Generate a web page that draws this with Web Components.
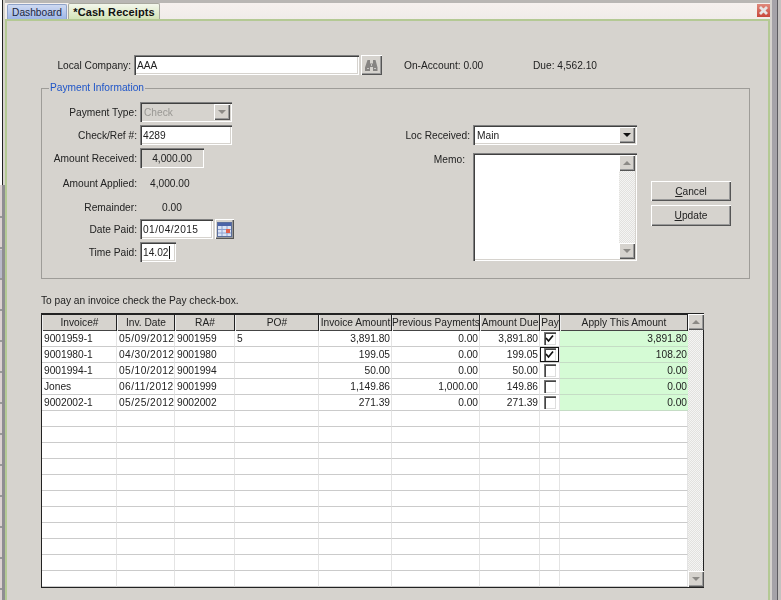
<!DOCTYPE html>
<html>
<head>
<meta charset="utf-8">
<style>
  html, body { margin: 0; height: 600px; overflow: hidden; background: #d6d3ce; }
  body { font: 10.2px "Liberation Sans", Arial, sans-serif; color: #222; }
</style>
</head>
<body>
<cash-app></cash-app>
<script>
// shared classic win look
const SUNKEN = 'box-shadow: inset 1px 1px #808080, inset 2px 2px #404040, inset -1px -1px #fff, inset -2px -2px #d6d3ce;';
const RAISED = 'box-shadow: inset 1px 1px #fff, inset -1px -1px #555, inset -2px -2px #999;';
const BASE = '* { box-sizing: border-box; } .d { letter-spacing: .45px; }';

class WinEl extends HTMLElement {
  constructor() {
    super();
    this.attachShadow({ mode: 'open' });
  }
  connectedCallback() {
    this.shadowRoot.innerHTML = `<style>${BASE}${this.css()}</style>${this.html()}`;
  }
  css() { return ''; }
  html() { return '<slot></slot>'; }
}

class WinArrow extends WinEl {
  css() {
    return `:host { display: flex; align-items: center; justify-content: center; width: 16px; height: 16px; background: #d6d3ce; ${RAISED} flex: none; }`;
  }
  html() {
    const col = this.hasAttribute('off') ? '#8c8a86' : '#111';
    const pts = this.getAttribute('dir') === 'up' ? '0,5 8,5 4,1' : '0,1 8,1 4,5';
    return `<svg width="8" height="6"><polygon points="${pts}" fill="${col}"/></svg>`;
  }
}

class WinInput extends WinEl {
  css() {
    return `:host { display: flex; align-items: center; height: 20px; padding: 0 2px 0 3px; background: #fff; white-space: nowrap; overflow: hidden; ${SUNKEN} }`;
  }
}

class WinSelect extends WinEl {
  css() {
    return `:host { display: flex; align-items: center; justify-content: space-between; height: 20px; padding: 0 2px 0 4px; background: #fff; ${SUNKEN} }
      :host([off]) { background: #d6d3ce; color: #9a9894; }`;
  }
  html() {
    return `<slot></slot><win-arrow dir="down" ${this.hasAttribute('off') ? 'off' : ''}></win-arrow>`;
  }
}

class WinBtn extends WinEl {
  css() {
    return `:host { display: flex; align-items: center; justify-content: center; height: 20px; background: #d6d3ce; ${RAISED} }`;
  }
}

class WinScroll extends WinEl {
  css() {
    return `:host { display: flex; flex-direction: column; justify-content: space-between; width: 16px;
      background: repeating-conic-gradient(#e2e1de 0 25%, #f4f4f3 0 50%) 0 0 / 2px 2px; }`;
  }
  html() {
    return '<win-arrow dir="up" off></win-arrow><win-arrow dir="down" off></win-arrow>';
  }
}

class WinField extends WinEl {
  css() {
    const w = this.getAttribute('w') || 95;
    return `:host { display: grid; grid-template-columns: ${w}px 1fr; column-gap: 3px; align-items: center; height: ${this.getAttribute('h') || 20}px; }
      :host([top]) .lab { align-self: start; padding: 1px 5px 0 0; }
      .lab { text-align: right; white-space: nowrap; }
      .val { display: flex; align-items: center; gap: 2px; }`;
  }
  html() {
    return `<div class="lab"><slot name="label"></slot></div><div class="val"><slot></slot></div>`;
  }
}

class WinGroup extends WinEl {
  css() {
    return `:host { display: block; width: 709px; margin-top: 6px; }
      fieldset { margin: 0; padding: 7px 0 16px 0; border: 1px solid #9e9c98; min-width: 0; }
      legend { margin-left: 7px; padding: 0 1px; height: 14px; line-height: 14px; color: #1f55c8; }`;
  }
  html() {
    return `<fieldset><legend>${this.getAttribute('legend')}</legend><slot></slot></fieldset>`;
  }
}

class TabBar extends WinEl {
  css() {
    return `:host { display: flex; align-items: flex-end; height: 19px; padding-left: 2px; padding-right: 0; flex: none; gap: 1px;
        background: linear-gradient(#b9b7b4 0 3px, #f6f1ee 3px, #f0ece9 100%); }
      .tab { display: flex; align-items: center; justify-content: center; border-radius: 2px 2px 0 0; }
      .a { width: 60px; height: 15px; color: #1c2740;
        background: linear-gradient(#cfdaf2, #9fb6e6); border: 1px solid #8fa3c9; border-bottom: 0; }
      .b { width: 92px; height: 16px; font: bold 11px "Liberation Sans", Arial, sans-serif; letter-spacing: .1px; color: #111; margin-right: auto;
        background: linear-gradient(#f4f7ec, #d3e3b8); border: 1px solid #a9a89f; border-bottom: 0; }
      .x { width: 13px; height: 13px; margin-bottom: 2px; background: linear-gradient(#e08a7c, #c8463a); }`;
  }
  html() {
    return `<div class="tab a">Dashboard</div><div class="tab b">*Cash Receipts</div>
      <div class="x"><svg width="13" height="13" style="display:block"><path d="M3 3 10 10M10 3 3 10" stroke="#e6e4e4" stroke-width="2.8"/></svg></div>`;
  }
}

const COLS = [75, 58, 60, 84, 73, 88, 60, 20, 128];
const HEAD = ['Invoice#', 'Inv. Date', 'RA#', 'PO#', 'Invoice Amount', 'Previous Payments', 'Amount Due', 'Pay', 'Apply This Amount'];
const ROWS = [
  ['9001959-1', '05/09/2012', '9001959', '5', '3,891.80', '0.00', '3,891.80', 1, '3,891.80'],
  ['9001980-1', '04/30/2012', '9001980', '', '199.05', '0.00', '199.05', 2, '108.20'],
  ['9001994-1', '05/10/2012', '9001994', '', '50.00', '0.00', '50.00', 0, '0.00'],
  ['Jones', '06/11/2012', '9001999', '', '1,149.86', '1,000.00', '149.86', 0, '0.00'],
  ['9002002-1', '05/25/2012', '9002002', '', '271.39', '0.00', '271.39', 0, '0.00'],
];
const CHECK = '<svg width="9" height="9" viewBox="0 0 9 9"><path d="M1 4 3.500 7 8 1.500" fill="none" stroke="#111" stroke-width="1.700"/></svg>';

class InvoiceGrid extends WinEl {
  css() {
    return `:host { display: flex; width: 663px; height: 275px; margin-top: 5px; border: 1px solid #222; border-right: 2px solid #222; background: #fff; }
      .t { display: grid; grid-template-columns: ${COLS.join('px ')}px; grid-template-rows: 17px; grid-auto-rows: 16px; align-content: start; width: 646px; }
      .h { display: flex; align-items: center; justify-content: center; background: #d6d3ce; white-space: nowrap; overflow: hidden;
        box-shadow: inset 0 1px #222, inset 1px 0 #eee, inset -1px 0 #222, inset 0 -1px #444; }
      .c { display: flex; align-items: center; padding: 0 1px 0 2px; border-bottom: 1px solid #cbcbcb; border-right: 1px solid #e4e4e4; white-space: nowrap; }
      .r { justify-content: flex-end; }
      .g { background: #d5fbd5; border-right: 0; border-bottom-color: #c5dcc5; }
      .p { justify-content: center; padding: 0; }
      .f { box-shadow: inset 0 0 0 1px #111; }
      .cb { width: 12px; height: 13px; display: flex; align-items: center; justify-content: center; background: #fff;
        box-shadow: inset 1px 1px #777, inset 2px 2px #444, inset -1px -1px #ddd; }
      win-scroll { width: 15px; }`;
  }
  html() {
    let s = HEAD.map(h => `<div class="h">${h}</div>`).join('');
    for (const r of ROWS) {
      r.forEach((v, i) => {
        if (i === 7) {
          s += `<div class="c p ${v === 2 ? 'f' : ''}"><span class="cb">${v ? CHECK : ''}</span></div>`;
        } else {
          s += `<div class="c ${i > 3 ? 'r' : ''} ${i === 8 ? 'g' : ''} ${i === 1 ? 'd' : ''}">${v}</div>`;
        }
      });
    }
    for (let n = 0; n < 11; n++) {
      s += COLS.map(() => '<div class="c"></div>').join('');
    }
    return `<div class="t">${s}</div><win-scroll></win-scroll>`;
  }
}

class CashApp extends WinEl {
  css() {
    return `:host { display: flex; width: 781px; height: 600px; overflow: hidden; filter: blur(.4px); }
      .left { width: 5px; flex: none; background:
        linear-gradient(90deg, #fff 0 2px, #222 2px 3px, #d6d3ce 3px) 0 0 / 100% 185px no-repeat,
        linear-gradient(90deg, transparent 0 2px, #8f8e92 2px) 0 0 / 100% 100% no-repeat,
        linear-gradient(#dcd2d2 0 250px, #b9b9c8 250px 280px, #dcd2d2 280px) 0 0 / 100% 100% no-repeat; }
      .lines { width: 2px; height: 100%; background: repeating-linear-gradient(transparent 0 29px, #999 29px 31px) 0 187px / 2px 100% no-repeat; }
      .win { flex: 1; display: flex; flex-direction: column; min-width: 0; }
      .right { width: 11px; flex: none; background: linear-gradient(90deg, #d6d3ce 0 2px, #a5a3a8 2px 7px, #5d5c60 7px 8px, #c4c2c0 8px); }
      .panel { flex: 1; border: 2px solid #b4c994; border-bottom: 0; padding: 34px 0 0 34px; }
      .company { display: flex; align-items: center; height: 20px; }
      .company .name { width: 90px; text-align: right; margin-right: 3px; }
      .company win-input { width: 225px; padding-left: 3px; }
      .icon { width: 21px; height: 20px; margin-left: 2px; display: flex; align-items: center; justify-content: center; background: #d6d3ce; ${RAISED} }
      .oa { margin-left: 22px; width: 129px; }
      .body { display: flex; }
      .lc { width: 358px; display: flex; flex-direction: column; gap: 3px; }
      .rc { width: 237px; padding-top: 23px; display: flex; flex-direction: column; gap: 8px; }
      .bc { width: 80px; margin-left: 14px; padding-top: 79px; display: flex; flex-direction: column; gap: 4px; }
      .amt { display: flex; align-items: center; justify-content: center; width: 64px; height: 20px; background: #d6d3ce; ${SUNKEN} }
      .memo { display: flex; justify-content: flex-end; width: 164px; height: 108px; padding: 2px; background: #fff; ${SUNKEN} }
      .caret { border-right: 1px solid #111; height: 13px; display: inline-flex; align-items: center; }
      .note { margin-top: 15px; height: 14px; line-height: 14px; }
      .ind { padding-left: 10px; }`;
  }
  html() {
    return `
      <div class="left"><div class="lines"></div></div>
      <div class="win">
        <tab-bar></tab-bar>
        <div class="panel">
          <div class="company">
            <span class="name">Local Company:</span>
            <win-input>AAA</win-input>
            <div class="icon"><svg width="13" height="13" viewBox="0 0 13 13"><path d="M2.500 1h2.500v3.500h3V1h2.500l2 7.500V12H8V8H5v4H0V8.500z" fill="#868482"/><path d="M2 9.500h2M9 9.500h2M6.500 5v2" stroke="#c8c6c4"/></svg></div>
            <span class="oa">On-Account: 0.00</span>
            <span>Due: 4,562.10</span>
          </div>
          <win-group legend="Payment Information">
            <div class="body">
              <div class="lc">
                <win-field><span slot="label">Payment Type:</span><win-select off style="width:92px">Check</win-select></win-field>
                <win-field><span slot="label">Check/Ref #:</span><win-input style="width:92px">4289</win-input></win-field>
                <win-field><span slot="label">Amount Received:</span><div class="amt">4,000.00</div></win-field>
                <win-field h="24"><span slot="label">Amount Applied:</span><span class="ind">4,000.00</span></win-field>
                <win-field h="18"><span slot="label">Remainder:</span><span style="padding-left:22px">0.00</span></win-field>
                <win-field><span slot="label">Date Paid:</span><win-input style="width:73px"><span style="letter-spacing:.45px">01/04/2015</span></win-input>
                  <div class="icon" style="width:19px;margin:0"><svg width="15" height="15" viewBox="0 0 15 15"><rect x=".5" y=".5" width="14" height="14" fill="#dbe4f6" stroke="#5c6f9c"/><rect x="1" y="1" width="13" height="3" fill="#4c64a8"/><path d="M5 4v10M10 4v10M1 7.500h13M1 11h13" stroke="#8ea2cf"/><rect x="9" y="7" width="4" height="4" fill="#e2604c"/></svg></div>
                </win-field>
                <win-field><span slot="label">Time Paid:</span><win-input style="width:36px"><span class="caret">14.02</span></win-input></win-field>
              </div>
              <div class="rc">
                <win-field w="70"><span slot="label">Loc Received:</span><win-select style="width:164px">Main</win-select></win-field>
                <win-field w="70" h="108" top><span slot="label">Memo:</span><div class="memo"><win-scroll></win-scroll></div></win-field>
              </div>
              <div class="bc">
                <win-btn><span><u>C</u>ancel</span></win-btn>
                <win-btn style="height:21px"><span><u>U</u>pdate</span></win-btn>
              </div>
            </div>
          </win-group>
          <div class="note">To pay an invoice check the Pay check-box.</div>
          <invoice-grid></invoice-grid>
        </div>
      </div>
      <div class="right"></div>`;
  }
}

customElements.define('win-arrow', WinArrow);
customElements.define('win-input', WinInput);
customElements.define('win-select', WinSelect);
customElements.define('win-btn', WinBtn);
customElements.define('win-scroll', WinScroll);
customElements.define('win-field', WinField);
customElements.define('win-group', WinGroup);
customElements.define('tab-bar', TabBar);
customElements.define('invoice-grid', InvoiceGrid);
customElements.define('cash-app', CashApp);
</script>
</body>
</html>
